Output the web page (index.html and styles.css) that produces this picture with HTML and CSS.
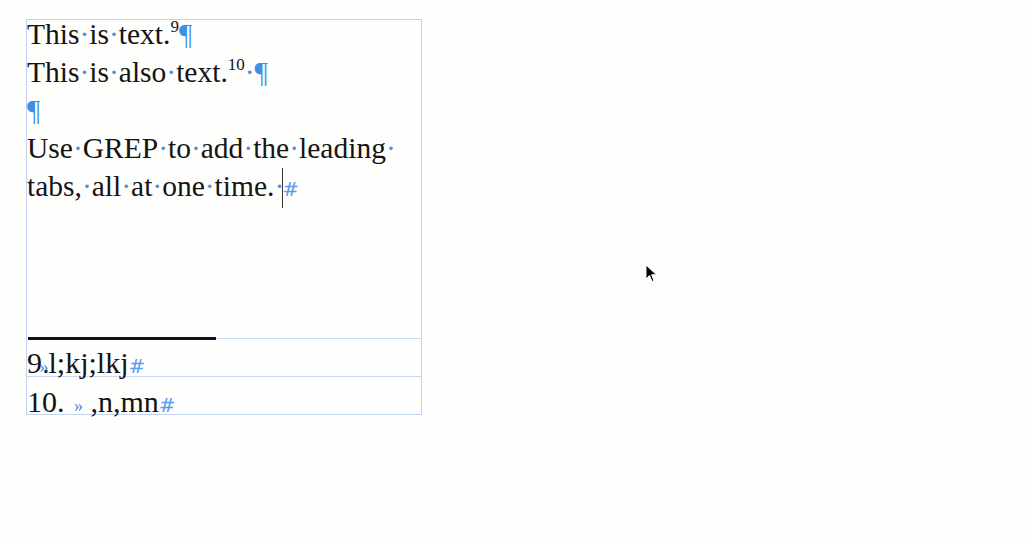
FILE: index.html
```html
<!DOCTYPE html>
<html>
<head>
<meta charset="utf-8">
<link rel="stylesheet" href="styles.css">
</head>
<body>
<div class="frame">
  <div class="main">
    <p class="line">This<span class="sp">·</span>is<span class="sp">·</span>text.<sup class="fn">9</sup><span class="pil">¶</span></p>
    <p class="line">This<span class="sp">·</span>is<span class="sp">·</span>also<span class="sp">·</span>text.<sup class="fn">10</sup><span class="sp">·</span><span class="pil">¶</span></p>
    <p class="line"><span class="pil">¶</span></p>
    <p class="line">Use<span class="sp">·</span>GREP<span class="sp">·</span>to<span class="sp">·</span>add<span class="sp">·</span>the<span class="sp">·</span>leading<span class="sp">·</span></p>
    <p class="line">tabs,<span class="sp">·</span>all<span class="sp">·</span>at<span class="sp">·</span>one<span class="sp">·</span>time.<span class="sp">·</span><span class="caret"></span><span class="hash">#</span></p>
  </div>
  <div class="notes">
    <div class="rule"></div>
    <p class="note">9.<span class="tab">»</span>l;kj;lkj<span class="hash">#</span></p>
    <p class="note note2">10. <span class="tab">»</span> ,n,mn<span class="hash">#</span></p>
  </div>
</div>
<svg class="pointer" width="14" height="20" viewBox="0 0 14 20">
  <path d="M1 1 L1 15 L4.5 11.5 L7 17.5 L9 16.6 L6.6 10.8 L11.5 10.8 Z" fill="#000" stroke="#fff" stroke-width="1"/>
</svg>
</body>
</html>
```
FILE: styles.css
```css
html, body {
  margin: 0;
  padding: 0;
  background: #fefefd;
}
body {
  width: 1032px;
  height: 544px;
  position: relative;
  font-family: "Liberation Serif", "Times New Roman", serif;
  color: #141414;
}
.frame {
  position: absolute;
  left: 26px;
  top: 19px;
  width: 394px;
  height: 394px;
  border: 1px solid #c3d3f3;
  display: flex;
  flex-direction: column;
}
.main {
  height: 323px;
  flex: none;
  margin-top: -5px;
}
.line {
  margin: 0;
  font-size: 29.5px;
  line-height: 38px;
  white-space: nowrap;
}
.sp {
  color: #4a90e2;
}
.fn {
  font-size: 17px;
  vertical-align: 0;
  position: relative;
  top: -12px;
  line-height: 0;
}
.pil {
  color: #3f8fe6;
}
.hash {
  color: #5b9cec;
  font-family: "DejaVu Sans", sans-serif;
  font-size: 20px;
  font-style: italic;
}
.caret {
  display: inline-block;
  width: 1px;
  height: 40px;
  background: #333;
  vertical-align: -12px;
  margin-left: -2px;
  margin-right: -1px;
}
.notes {
  border-top: 1px solid #c8d8f6;
  position: relative;
  flex: none;
}
.rule {
  position: absolute;
  left: 1px;
  top: -2px;
  width: 188px;
  height: 3px;
  background: #111;
}
.note {
  margin: 0;
  font-size: 30px;
  line-height: 48px;
  height: 37px;
  white-space: nowrap;
}
.note2 {
  border-top: 1px solid #c8d8f6;
  line-height: 50px;
}
.tab {
  color: #4a90e2;
  font-size: 18px;
}
.note .tab {
  margin-left: -10px;
}
.note2 .tab {
  margin-left: 2px;
}
.pointer {
  position: absolute;
  left: 645px;
  top: 264px;
}
```
